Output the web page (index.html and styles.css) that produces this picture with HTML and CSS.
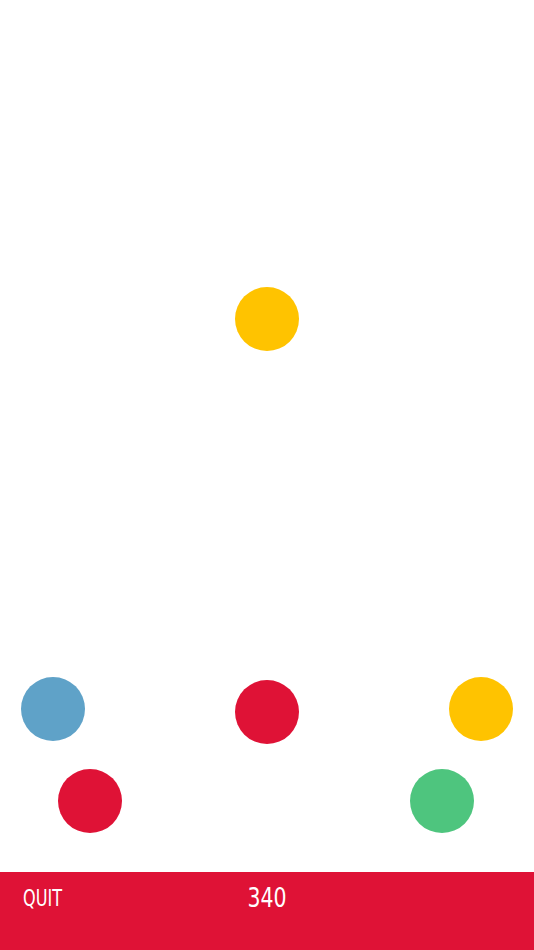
FILE: index.html
```html
<!DOCTYPE html>
<html lang="en">
<head>
    <meta charset="UTF-8">
    <meta name="viewport" content="width=device-width, initial-scale=1.0">
    <title>Dots</title>
    <link rel="stylesheet" href="styles.css">
</head>
<body>
    <div class="game">
        <div class="board">
            <!-- falling dot -->
            <span class="dot yellow" style="left: 235px; top: 287px;"></span>

            <!-- catchers -->
            <span class="dot blue" style="left: 21px; top: 677px;"></span>
            <span class="dot red" style="left: 235px; top: 680px;"></span>
            <span class="dot yellow" style="left: 449px; top: 677px;"></span>
            <span class="dot red" style="left: 58px; top: 769px;"></span>
            <span class="dot green" style="left: 410px; top: 769px;"></span>
        </div>

        <div class="bar">
            <a class="quit" href="#">QUIT</a>
            <span class="score">340</span>
        </div>
    </div>
</body>
</html>
```

FILE: styles.css
```css
* {
    margin: 0;
    padding: 0;
    box-sizing: border-box;
}

body {
    background: #ffffff;
    font-family: 'DejaVu Sans', 'Liberation Sans', sans-serif;
}

.game {
    width: 534px;
    height: 950px;
    display: flex;
    flex-direction: column;
}

.board {
    position: relative;
    flex: 1;
}

.dot {
    position: absolute;
    width: 64px;
    height: 64px;
    border-radius: 50%;
}

.yellow { background: #ffc300; }
.blue   { background: #5fa2c8; }
.red    { background: #df1236; }
.green  { background: #4ec57e; }

.bar {
    height: 78px;
    background: #df1236;
    color: #ffffff;
    position: relative;
    display: flex;
    align-items: flex-start;
    padding: 12px 0 0 23px;
}

.quit {
    color: #ffffff;
    text-decoration: none;
    font-size: 23px;
    font-weight: 400;
    line-height: 28px;
    display: inline-block;
    transform: scaleX(0.7);
    transform-origin: left center;
}

.score {
    position: absolute;
    left: 0;
    right: 0;
    top: 10px;
    text-align: center;
    font-size: 27px;
    font-weight: 400;
    line-height: 32px;
    transform: scaleX(0.76);
}
```
